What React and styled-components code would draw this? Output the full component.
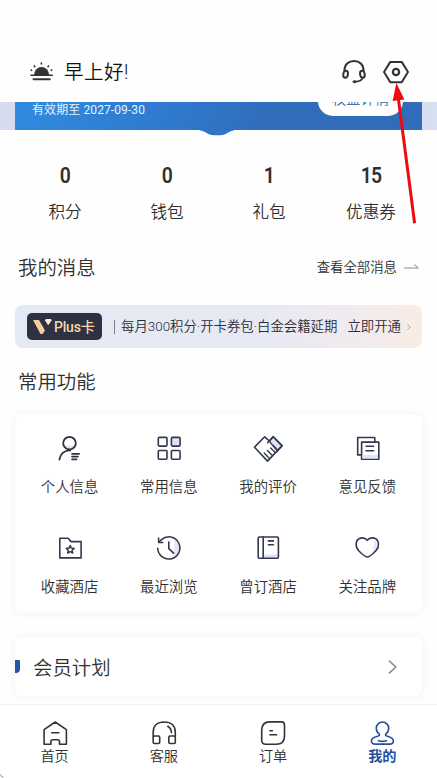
import React from "react";
import styled, { createGlobalStyle } from "styled-components";

const GlobalStyle = createGlobalStyle`
  * {
    box-sizing: border-box;
  }
  body {
    margin: 0;
    background: #fefefe;
    font-family: Roboto, "Noto Sans CJK SC", sans-serif;
    font-weight: 350;
    color: #303030;
  }
  svg {
    display: block;
    flex: none;
    overflow: visible;
  }
`;

const Page = styled.div`
  position: relative;
  display: flex;
  flex-direction: column;
  height: 778px;
  overflow: hidden;
`;

const Header = styled.header`
  display: flex;
  align-items: center;
  height: 102px;
  padding: 42px 27px 0 28px;
`;
const Greeting = styled.h1`
  flex: 1;
  margin: 0 0 0 8px;
  padding-top: 2px;
  font-size: 19.5px;
  font-weight: 350;
  letter-spacing: 0.5px;
  line-height: 28px;
  color: #111;
`;
const HeaderIcons = styled.div`
  display: flex;
  gap: 14px;
`;

const Strip = styled.div`
  height: 28px;
  padding: 0 15px;
  background: linear-gradient(90deg, #d6dcee, #d6e0f1);
`;
const MemberCard = styled.div`
  position: relative;
  height: 28px;
  background: linear-gradient(100deg, #2f8be0 0%, #2f7bcf 35%, #316dbb 62%, #306cba 100%);
`;
const CardClip = styled.div`
  display: flex;
  justify-content: space-between;
  align-items: flex-end;
  height: 28px;
  padding: 0 19px 13px 17px;
  overflow: hidden;
`;
const Expiry = styled.div`
  margin-bottom: -1px;
  font-size: 12px;
  font-weight: 400;
  letter-spacing: 0.1px;
  line-height: 16px;
  color: #e6f1fc;
`;
const Benefits = styled.div`
  height: 30px;
  width: 85px;
  margin-bottom: 1px;
  border-radius: 15px;
  background: #fff;
  font-size: 14.4px;
  line-height: 27px;
  text-align: center;
  color: #3463a8;
`;
const Notch = styled.svg`
  position: absolute;
  top: 27.5px;
  left: 185px;
`;

const Stats = styled.div`
  display: grid;
  grid-template-columns: repeat(4, 102px);
  padding: 34px 0 0 14px;
  height: 122px;
`;
const Stat = styled.div`
  text-align: center;
`;
const Count = styled.div`
  font-size: 21.5px;
  font-weight: 600;
  letter-spacing: -0.8px;
  line-height: 24px;
  transform: scaleX(0.9);
`;
const StatLabel = styled.div`
  margin-top: 13px;
  font-size: 16.6px;
  line-height: 24px;
`;

const SectionHead = styled.div`
  display: flex;
  justify-content: space-between;
  align-items: center;
  height: ${(p) => p.$height}px;
  padding: ${(p) => p.$shift}px 18px 0;
`;
const Title = styled.h2`
  margin: 0;
  padding-top: 1px;
  font-size: 19.4px;
  font-weight: 350;
  line-height: 28px;
`;
const More = styled.div`
  display: flex;
  align-items: center;
  gap: 7px;
  font-size: 13.4px;
  line-height: 20px;
`;

const PlusBar = styled.div`
  display: flex;
  align-items: center;
  height: 43px;
  margin: 22px 15px 0;
  padding: 0 11px 0 12px;
  border-radius: 8px;
  background: linear-gradient(90deg, #e3eaf4 0%, #e7e9f3 60%, #f1ebee 84%, #f9ece4 100%);
  font-size: 13.4px;
  line-height: 20px;
  white-space: nowrap;
  color: #2a2c38;
`;
const PlusBadge = styled.div`
  display: flex;
  align-items: center;
  gap: 2px;
  width: 75px;
  height: 27px;
  padding-left: 6px;
  border-radius: 5px;
  background: #2d3141;
  font-size: 14px;
  font-weight: 500;
  letter-spacing: -0.2px;
  color: #f5d6ac;
`;
const Divider = styled.div`
  width: 1px;
  height: 14px;
  margin: 0 6px 0 12px;
  background: #7c808c;
`;
const PlusText = styled.div`
  padding-top: 1px;
`;
const PlusAction = styled.div`
  display: flex;
  align-items: center;
  gap: 6px;
  margin-left: auto;
  padding-top: 1px;
`;

const Panel = styled.section`
  margin: 0 15px;
  border-radius: 7px;
  background: #fff;
  box-shadow: 0 0 8px rgba(0, 0, 0, 0.06);
`;
const FeatureGrid = styled(Panel)`
  display: grid;
  grid-template-columns: repeat(4, 1fr);
  grid-auto-rows: 100px;
  height: 199px;
  margin-top: 5px;
  padding: 20px 5px 0;
`;
const Feature = styled.div`
  display: flex;
  flex-direction: column;
  align-items: center;
  font-size: 14.4px;
  line-height: 20px;
`;
const FeatureLabel = styled.span`
  margin-top: 16px;
`;

const PlanRow = styled(Panel)`
  display: flex;
  align-items: center;
  height: 59px;
  margin-top: 24px;
  padding-right: 25px;
`;
const Marker = styled.div`
  width: 5px;
  height: 13px;
  margin-right: 13px;
  border-radius: 0 1px 4px 0;
  background: #2653a3;
`;
const PlanTitle = styled(Title)`
  flex: 1;
  padding-top: 4px;
`;

const TabBar = styled.nav`
  display: grid;
  grid-template-columns: repeat(4, 1fr);
  height: 74px;
  margin-top: auto;
  border-top: 1px solid #f1f1f1;
  background: #fff;
  z-index: 1;
`;
const Tab = styled.div`
  display: flex;
  flex-direction: column;
  align-items: center;
  padding-top: 14px;
  font-size: 14.2px;
  font-weight: ${(p) => (p.$active ? 700 : 350)};
  line-height: 19px;
  color: ${(p) => (p.$active ? "#274f9c" : "#303030")};
`;

const Pointer = styled.svg`
  position: absolute;
  top: 0;
  left: 0;
  z-index: 2;
  pointer-events: none;
`;

const Icon = ({ children, width = 1.6, color = "#33384d" }) => (
  <svg
    width="28"
    height="28"
    viewBox="0 0 28 28"
    fill="none"
    stroke={color}
    strokeWidth={width}
    strokeLinecap="round"
    strokeLinejoin="round"
  >
    {children}
  </svg>
);

const SunIcon = () => (
  <Icon color="#333">
    <path d="M6.2 17a7.4 8 0 0 1 14.8 0z" fill="#333" stroke="none" />
    <path d="M3 17.2h21.2" strokeWidth="1.6" />
    <path d="M5.5 21.2h16.3" strokeWidth="1.9" />
    <path d="M13.4 6V5M6.8 8.700l-.5-.7M20 8.700l.5-.7M3.600 12.300l-.4-.3M23.300 12.300l.4-.3" />
  </Icon>
);

const HeadsetIcon = () => (
  <Icon color="#333" width={2}>
    <path d="M4.4 12.6C4.4 6.4 8.6 2.9 14 2.9s9.600 3.500 9.600 9.700" />
    <ellipse cx="5.6" cy="16.2" rx="2.3" ry="3.5" transform="rotate(10 5.6 16.2)" />
    <ellipse cx="22.4" cy="16.2" rx="2.3" ry="3.5" transform="rotate(-10 22.4 16.2)" />
    <path d="M22.8 19.5c-.8 2.500-3.500 4-7 4.200" strokeWidth="1.7" />
    <ellipse cx="14.6" cy="23.7" rx="1.7" ry="1" fill="#333" strokeWidth="1" />
  </Icon>
);

const SettingsIcon = () => (
  <Icon color="#333" width={2}>
    <path d="M8.3 3.9h11.400L26 14l-6.300 10.300H8.300L2 14z" />
    <circle cx="14" cy="14" r="3.1" strokeWidth="2.3" />
  </Icon>
);

const features = [
  {
    label: "个人信息",
    icon: (
      <>
        <path d="M8.2 11.5h10.600a5.800 5.800 0 0 1-10.600 0z" fill="#dfe3f8" stroke="none" />
        <circle cx="13.5" cy="9.2" r="6.3" stroke="#30323a" strokeWidth="1.8" />
        <path d="M3.4 25.6c.6-5.400 4.800-9.400 10.800-9.200" stroke="#30323a" strokeWidth="1.8" />
        <path d="M16 19.9h7.200M16 22.600h6M16 25.400h4.600" stroke="#30323a" />
      </>
    ),
  },
  {
    label: "常用信息",
    icon: (
      <>
        <rect x="3.3" y="3.4" width="8.7" height="8.7" rx="1" />
        <rect x="16.4" y="3.4" width="8.7" height="8.7" rx="1" fill="#dfe3fa" />
        <rect x="3.3" y="16.5" width="8.7" height="8.7" rx="1" />
        <rect x="16.4" y="16.5" width="8.7" height="8.7" rx="1" />
      </>
    ),
  },
  {
    label: "我的评价",
    icon: (
      <>
        <path d="M15.3 7 19.2 2.7l8.900 9-5.400 6z" fill="#dfe3fa" />
        <path d="M.5 13.2 10.7 2.8l12.200 14.600-9.400 9.700z" fill="#fff" stroke="none" />
        <path d="M15.3 7 10.7 2.8.5 13.2l13 13.9L28.1 11.7 19.2 2.7 15.3 7l-1.500 1.600" />
        <path d="m16.6 14 5 4.800M13.4 16.600l5 4.900M10.2 19.100l5 5.200M19 11.300l4.600 4.600" strokeWidth="1.4" />
      </>
    ),
  },
  {
    label: "意见反馈",
    icon: (
      <>
        <path d="M8 20.9H4.7V3.5h17.100v4" />
        <rect x="8.6" y="8.1" width="17.2" height="17.2" fill="#fff" />
        <path d="M9.4 21h15.600v3.500H9.400z" fill="#dfe3fa" stroke="none" />
        <path d="M13 12.2h7.600M13 16.700h7.600" />
      </>
    ),
  },
  {
    label: "收藏酒店",
    icon: (
      <>
        <path d="M3.8 4.3h8.300l3 3.300h10v16.300H3.800z" />
        <path
          d="m14.2 11.5 1.200 2.600 2.800.3-2.100 1.900.6 2.800-2.500-1.500-2.500 1.500.6-2.800-2.100-1.900 2.800-.3z"
          strokeWidth="1.5"
        />
      </>
    ),
  },
  {
    label: "最近浏览",
    icon: (
      <>
        <path d="M19.5 5.2a10.500 10.500 0 0 1 0 17.600z" fill="#e2e6fb" stroke="none" />
        <path d="M2.7 14.3a11.100 11.100 0 1 0 3.800-8.700L4 8" strokeWidth="1.5" />
        <path d="M3.6 4v4.600h4.200" strokeWidth="1.5" />
        <path d="M13.8 8v6.700l4.800 4.400" />
      </>
    ),
  },
  {
    label: "曾订酒店",
    icon: (
      <>
        <path d="M10 20.5h14v3.300H10z" fill="#dfe3fa" stroke="none" />
        <rect x="4.2" y="3" width="20.2" height="21.3" rx="1" />
        <path d="M9.2 3v21.300M14.400 6.900h5M14.400 10.700h5" />
      </>
    ),
  },
  {
    label: "关注品牌",
    icon: (
      <>
        <path d="M22 6.5c3.500 4 1 8.500-3 11.500z" fill="#e2e6fb" stroke="none" />
        <path d="M14.3 6.3C11.5 2.7 5.6 3.2 3.7 7.3c-1.900 4.300.9 8.900 4.800 12.200 2.200 1.900 4.300 3.500 5.800 3.500s3.600-1.600 5.800-3.500c3.900-3.300 6.700-7.900 4.800-12.200-1.900-4.100-7.800-4.600-10.600-1z" />
      </>
    ),
  },
];

const tabs = [
  {
    label: "首页",
    icon: (
      <path d="M9.9 25.2H3.1V10.6L14.2 3l11.200 7.600v14.600h-6.900v-2.700q0-1.700-1.700-1.700h-5.200q-1.700 0-1.700 1.700zM10.7 13.700h7.200" />
    ),
  },
  {
    label: "客服",
    icon: (
      <>
        <path d="M3.2 17.5v-4.300C3.200 6.500 7.500 3 14.200 3s11.100 3.500 11.100 10.200v4.300" />
        <rect x="3.2" y="17" width="6.5" height="7.5" rx="1.2" />
        <rect x="18.8" y="17" width="6.5" height="7.5" rx="1.2" />
        <path d="M17.8 7.3c2.300 1.200 3.400 3.100 3.700 6.400" />
      </>
    ),
  },
  {
    label: "订单",
    icon: (
      <>
        <path d="M11 2.9h11.500q3 0 3 3v11q0 8.300-8.300 8.300H6.700q-4 0-4-4V11.200q0-8.300 8.300-8.300z" />
        <path d="M10.9 11.8h2.500M10.900 15.700h6.700" />
      </>
    ),
  },
  {
    label: "我的",
    active: true,
    icon: (
      <>
        <path d="M11.3 15.2C9.2 13.7 8.3 11.5 8.3 9.2a6.200 6.200 0 0 1 12.400 0c0 2.300-.9 4.500-3 6-.6 1 .3 1.700 1.700 2.100 3.300.9 6 2.400 6 4.700 0 2.100-1.700 3.100-4.200 3.100H7.600c-2.500 0-4.200-1-4.200-3.100 0-2.300 2.700-3.800 6.200-4.700 1.400-.4 2.300-1.100 1.700-2.100z" />
        <path d="M10.5 21.7c2.500.9 5.300.9 8 0" />
      </>
    ),
  },
];

const stats = [
  ["0", "积分"],
  ["0", "钱包"],
  ["1", "礼包"],
  ["15", "优惠券"],
];

const App = () => (
  <Page>
    <GlobalStyle />
    <Header>
      <SunIcon />
      <Greeting>早上好!</Greeting>
      <HeaderIcons>
        <HeadsetIcon />
        <SettingsIcon />
      </HeaderIcons>
    </Header>

    <Strip>
      <MemberCard>
        <CardClip>
          <Expiry>有效期至 2027-09-30</Expiry>
          <Benefits>权益详情</Benefits>
        </CardClip>
        <Notch width="34" height="7" viewBox="0 0 34 7">
          <path d="M0 0h34v.5c-5 0-7 4.700-14 4.700h-6C7 5.200 5 .5 0 .5z" fill="#3075c6" />
        </Notch>
      </MemberCard>
    </Strip>

    <Stats>
      {stats.map(([count, label]) => (
        <Stat key={label}>
          <Count>{count}</Count>
          <StatLabel>{label}</StatLabel>
        </Stat>
      ))}
    </Stats>

    <SectionHead $height={31} $shift={1}>
      <Title>我的消息</Title>
      <More>
        查看全部消息
        <svg width="15" height="8" viewBox="0 0 15 8" fill="none" stroke="#8c8c8c">
          <path d="M0 4h14.300L9.800.3" />
        </svg>
      </More>
    </SectionHead>

    <PlusBar>
      <PlusBadge>
        <svg width="19" height="15" viewBox="0 0 19 15">
          <path d="M0 1h6l6 10.500L9.500 15h-2z" fill="#f3cf9d" />
          <path d="M11.800 1.200 13 0h5l.8 1.300-3.600 5z" fill="#fae9d2" />
        </svg>
        Plus卡
      </PlusBadge>
      <Divider />
      <PlusText>每月300积分·开卡券包·白金会籍延期</PlusText>
      <PlusAction>
        立即开通
        <svg width="4" height="6" viewBox="0 0 4 6" fill="none" stroke="#a9a5a8">
          <path d="m.5.3 2.700 2.700L.5 5.700" />
        </svg>
      </PlusAction>
    </PlusBar>

    <SectionHead $height={61} $shift={7}>
      <Title>常用功能</Title>
    </SectionHead>

    <FeatureGrid>
      {features.map(({ label, icon }) => (
        <Feature key={label}>
          <Icon>{icon}</Icon>
          <FeatureLabel>{label}</FeatureLabel>
        </Feature>
      ))}
    </FeatureGrid>

    <PlanRow>
      <Marker />
      <PlanTitle>会员计划</PlanTitle>
      <svg width="9" height="14" viewBox="0 0 9 14" fill="none" stroke="#8f8f93" strokeWidth="1.6">
        <path d="m1 .6 6.800 6.400L1 13.400" />
      </svg>
    </PlanRow>

    <TabBar>
      {tabs.map(({ label, icon, active }) => (
        <Tab key={label} $active={active}>
          <Icon color={active ? "#274f9c" : "#333"}>{icon}</Icon>
          {label}
        </Tab>
      ))}
    </TabBar>

    <Pointer width="437" height="778" viewBox="0 0 437 778">
      <path d="M398.3 98 414.6 223.3" stroke="#ee0a10" strokeWidth="3" />
      <path d="m396.4 83 8 16.500-11.800 1.600z" fill="#ee0a10" />
      <path d="M0 774.5 3.500 778" stroke="#222" strokeWidth="1" strokeDasharray="1.5 1" />
    </Pointer>
  </Page>
);

export default App;
